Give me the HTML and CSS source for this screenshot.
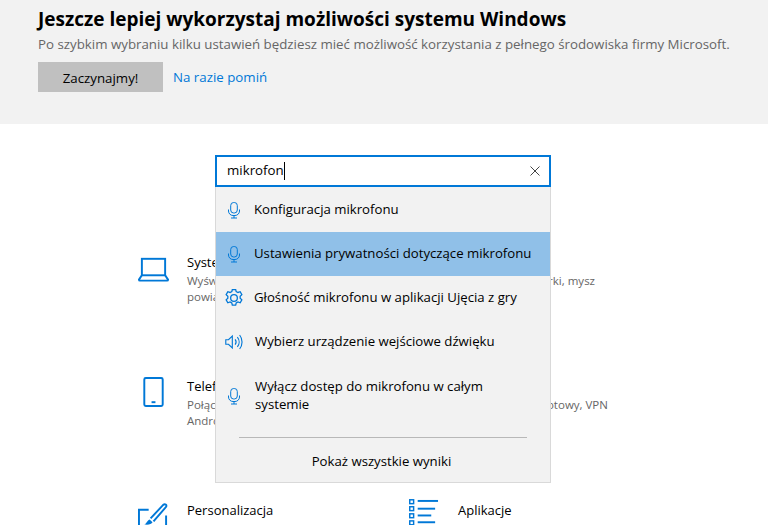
FILE: index.html
```html
<!DOCTYPE html>
<html lang="pl">
<head>
<meta charset="utf-8">
<title>Ustawienia</title>
<link rel="stylesheet" href="styles.css">
</head>
<body>
<section class="banner">
  <h1 class="banner-title">Jeszcze lepiej wykorzystaj możliwości systemu Windows</h1>
  <p class="banner-text">Po szybkim wybraniu kilku ustawień będziesz mieć możliwość korzystania z pełnego środowiska firmy Microsoft.</p>
  <div class="banner-actions">
    <button class="start-btn">Zaczynajmy!</button>
    <a class="skip-link">Na razie pomiń</a>
  </div>
</section>
<main class="content">
  <div class="search-wrap">
    <div class="search-box">
      <span class="search-value">mikrofon</span><span class="caret"></span>
      <svg class="clear-icon" viewBox="0 0 10 10"><path d="M.5.5l9 9M9.5.5l-9 9"/></svg>
    </div>
    <div class="dropdown">
      <div class="result">
        <svg class="result-icon" viewBox="0 0 16 20"><use href="#mic"/></svg>
        <span>Konfiguracja mikrofonu</span>
      </div>
      <div class="result result-active">
        <svg class="result-icon" viewBox="0 0 16 20"><use href="#mic"/></svg>
        <span>Ustawienia prywatności dotyczące mikrofonu</span>
      </div>
      <div class="result">
        <svg class="result-icon result-icon-wide" viewBox="1 3 14 14"><g fill="none" stroke="#0078d7" stroke-width="1"><circle cx="8" cy="10" r="2.6"/><path d="M6.7 3.400h2.600l.4 1.600 1.400.7 1.700-.6 1.300 2.300-1.300 1.200v1.600l1.300 1.200-1.300 2.300-1.700-.6-1.400.8-.4 1.600H6.700l-.4-1.600-1.400-.8-1.700.6-1.300-2.300 1.300-1.200V8.600L1.900 7.400l1.300-2.300 1.700.6 1.400-.7z"/></g></svg>
        <span>Głośność mikrofonu w aplikacji Ujęcia z gry</span>
      </div>
      <div class="result">
        <svg class="result-icon result-icon-wide" viewBox="0 2 16 16"><g fill="none" stroke="#0078d7" stroke-width="1"><path d="M.7 8v4h2.400l3.400 3.200V4.800L3.100 8z"/><path d="M9 7.600a4 4 0 0 1 0 4.800M11 5.600a7 7 0 0 1 0 8.800M13 3.800a10 10 0 0 1 0 12.400"/></g></svg>
        <span class="result-shift">Wybierz urządzenie wejściowe dźwięku</span>
      </div>
      <div class="result result-tall">
        <svg class="result-icon" viewBox="0 0 16 20"><use href="#mic"/></svg>
        <span class="result-shift">Wyłącz dostęp do mikrofonu w całym systemie</span>
      </div>
      <div class="divider"></div>
      <div class="show-all">Pokaż wszystkie wyniki</div>
    </div>
  </div>
  <div class="grid">
    <article class="tile">
      <svg class="tile-icon" viewBox="0 0 32 32"><g fill="none" stroke="#0078d7" stroke-width="2"><rect x="4" y="6" width="24" height="17"/><path d="M4 23l-3 4.500a1 1 0 0 0 1 1h28a1 1 0 0 0 1-1L28 23"/></g></svg>
      <div class="tile-body"><h2>System</h2><p>Wyświetlacz, dźwięk, powiadomienia, zasilanie</p></div>
    </article>
    <article class="tile">
      <svg class="tile-icon" viewBox="0 0 32 32"></svg>
      <div class="tile-body"><h2>Urządzenia</h2><p>Bluetooth, drukarki, mysz</p></div>
    </article>
    <article class="tile">
      <svg class="tile-icon" viewBox="0 0 32 32"><g fill="none" stroke="#0078d7" stroke-width="2"><rect x="6.500" y="1" width="19" height="29" rx="1.500"/></g><rect x="14" y="25" width="4" height="2" fill="#0078d7"/></svg>
      <div class="tile-body"><h2>Telefon</h2><p>Połącz urządzenie z systemem Android, iPhone</p></div>
    </article>
    <article class="tile">
      <svg class="tile-icon" viewBox="0 0 32 32"></svg>
      <div class="tile-body"><h2>Sieć i Internet</h2><p>Wi-Fi, tryb samolotowy, VPN</p></div>
    </article>
    <article class="tile">
      <svg class="tile-icon" viewBox="0 0 32 32"><g fill="none" stroke="#0078d7" stroke-width="2"><path d="M11 9H1v22h28V15"/></g><path d="M6 24c3 0 3-4 6-5l3 3c-1 2-5 3-9 2z" fill="#0078d7"/><path d="M13 18L26 4c2-1.500 4 0 3 2L16 21" fill="none" stroke="#0078d7" stroke-width="2"/></svg>
      <div class="tile-body"><h2>Personalizacja</h2></div>
    </article>
    <article class="tile">
      <svg class="tile-icon tile-icon-apps" viewBox="0 0 32 32"><g fill="#0078d7"><rect x="10" y="1" width="21" height="2"/><rect x="10" y="9" width="18" height="2"/><rect x="10" y="16" width="14" height="2"/><rect x="10" y="23" width="18" height="2"/></g><g fill="none" stroke="#0078d7" stroke-width="1.500"><rect x="1.800" y=".8" width="4" height="4"/><rect x="1.800" y="8" width="4" height="4"/><rect x="1.800" y="15.300" width="4" height="4"/><rect x="1.800" y="22.600" width="4" height="4"/></g></svg>
      <div class="tile-body"><h2>Aplikacje</h2></div>
    </article>
  </div>
</main>
<svg class="defs" width="0" height="0"><defs><g id="mic" fill="none" stroke="#0078d7" stroke-width="1"><rect x="4.700" y="2.500" width="6.600" height="10.500" rx="3"/><path d="M2.500 9.500v1.500a4.500 4.500 0 0 0 4.500 4.500h2a4.500 4.500 0 0 0 4.500-4.500V9.500M8 15.500v2.500M5 18h6"/></g></defs></svg>
</body>
</html>
```
FILE: styles.css
```css
* { box-sizing: border-box; }
html, body { height: 525px; overflow: hidden; }
body {
  margin: 0;
  background: #fff;
  color: #000;
  font-family: "Open Sans", "Noto Sans", sans-serif;
  font-size: 13px;
}
.banner {
  height: 124px;
  background: #f2f2f2;
  padding: 6px 38px 0;
}
.banner-title {
  margin: 0;
  font-size: 19px;
  line-height: 27px;
  font-weight: 700;
}
.banner-text {
  margin: 0;
  color: #666;
  font-size: 13.300px;
  line-height: 22px;
  white-space: nowrap;
}
.banner-actions {
  display: flex;
  align-items: center;
  gap: 10px;
  margin-top: 7px;
}
.start-btn {
  width: 125px;
  height: 30px;
  border: 0;
  padding: 1px 0 0;
  background: #c0c0c0;
  color: #000;
  font: inherit;
  font-size: 13.300px;
}
.skip-link { color: #0078d7; font-size: 13.300px; }
.content { padding-top: 31px; }
.search-wrap {
  position: relative;
  width: 336px;
  margin-left: 215px;
}
.search-box {
  display: flex;
  align-items: center;
  height: 32px;
  border: 2px solid #0078d7;
  background: #fff;
  padding: 0 9px 0 10px;
  font-size: 13.300px;
  line-height: 26px;
}
.search-value { position: relative; top: -1px; }
.caret {
  width: 1px;
  height: 18px;
  background: #000;
}
.clear-icon {
  width: 10px;
  height: 10px;
  margin-left: auto;
  fill: none;
  stroke: #444;
  stroke-width: 1;
}
.dropdown {
  position: absolute;
  z-index: 2;
  top: 32px;
  left: 0;
  width: 336px;
  height: 296px;
  background: #f2f2f2;
  border: solid #d9d9d9;
  border-width: 0 1px 1px 1px;
}
.result {
  display: flex;
  align-items: center;
  height: 44px;
  padding: 0 0 2px 10px;
  gap: 12px;
  font-size: 13.200px;
  line-height: 18px;
}
.result:first-child { margin-top: 1px; }
.result-active { background: #90c0e8; }
.result-icon { width: 16px; height: 20px; flex: none; margin-top: 2px; }
.result-icon-wide { width: 18px; height: 18px; margin: 2px -1px 0; }
.result-shift { margin-left: 1px; }
.result-tall { height: 62px; padding: 0 30px 0 10px; }
.divider {
  height: 1px;
  margin: 11px 23px 0;
  background: #b8b8b8;
}
.show-all {
  margin-top: 13px;
  padding-right: 3px;
  text-align: center;
  font-size: 13.200px;
  line-height: 20px;
}
.grid {
  display: grid;
  grid-template-columns: 271px 271px;
  grid-auto-rows: 124px;
  margin: 65px 0 0 138px;
}
.tile { display: flex; }
.tile-icon { width: 31px; height: 31px; flex: none; margin-right: 18px; margin-top: 1px; }
.tile-icon-apps { margin-left: -1px; margin-right: 19px; margin-top: -1px; }
.tile-body { width: 196px; }
.tile-body h2 {
  margin: 0;
  font-size: 13px;
  font-weight: 400;
  line-height: 20px;
}
.tile-body p {
  margin: 1px 0 0;
  color: #666;
  font-size: 11.500px;
  line-height: 16px;
}
.defs { position: absolute; }
```
